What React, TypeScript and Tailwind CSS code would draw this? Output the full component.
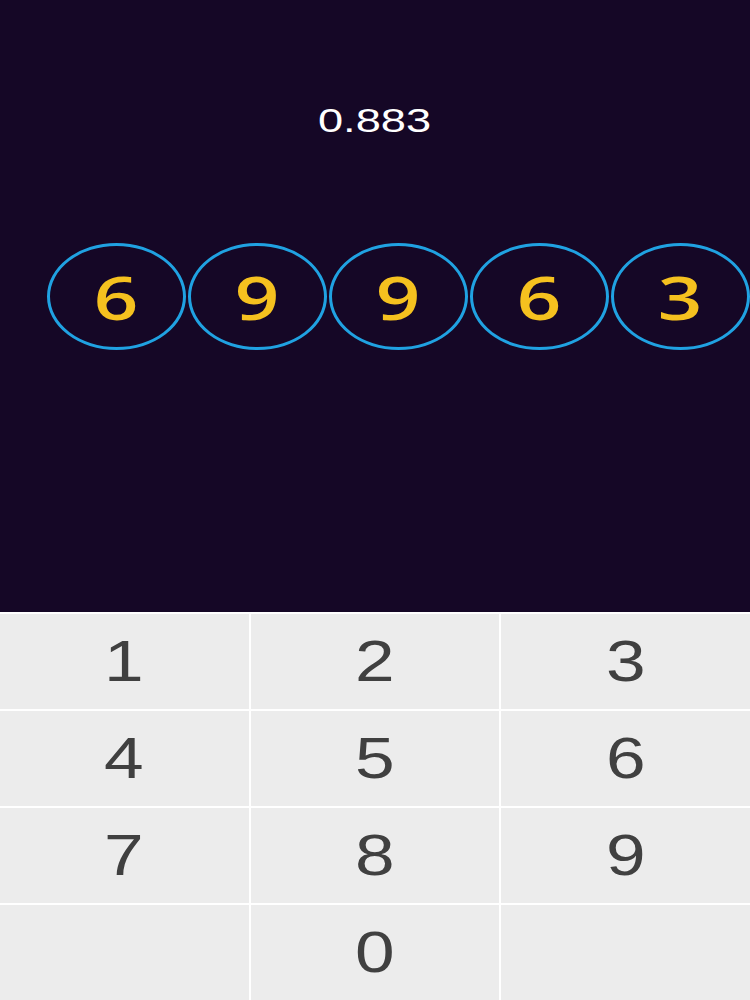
const digits = ['6', '9', '9', '6', '3'];
const keys = ['1', '2', '3', '4', '5', '6', '7', '8', '9', '', '0', ''];

export default function App() {
  return (
    <div className="w-[750px] h-[1000px] flex flex-col bg-white overflow-hidden">
      {/* Display area */}
      <div className="h-[612px] bg-[#150726] flex flex-col">
        <div className="h-[243px] flex justify-center pt-[96px]">
          <span className="inline-block scale-x-[1.33] text-[34px] leading-[48px] text-white font-['Liberation_Sans',Arial,sans-serif]">
            0.883
          </span>
        </div>
        <div className="flex gap-[2px] pl-[47px]">
          {digits.map((d, i) => (
            <div
              key={i}
              className="w-[139px] h-[107px] shrink-0 rounded-[50%] border-[3px] border-[#20a2e2] flex items-center justify-center"
            >
              <span className="inline-block scale-x-[1.3] text-[60px] leading-none font-semibold text-[#f5c11f] font-['Open_Sans',sans-serif]">
                {d}
              </span>
            </div>
          ))}
        </div>
      </div>

      {/* Keypad */}
      <div className="flex-1 grid grid-cols-3 grid-rows-4 gap-[2px] pt-[2px] bg-white">
        {keys.map((k, i) => (
          <div key={i} className="bg-[#ececec] flex items-center justify-center">
            <span className="inline-block scale-x-[1.25] text-[57px] leading-none text-[#404040] font-['Liberation_Sans',Arial,sans-serif]">
              {k}
            </span>
          </div>
        ))}
      </div>
    </div>
  );
}
